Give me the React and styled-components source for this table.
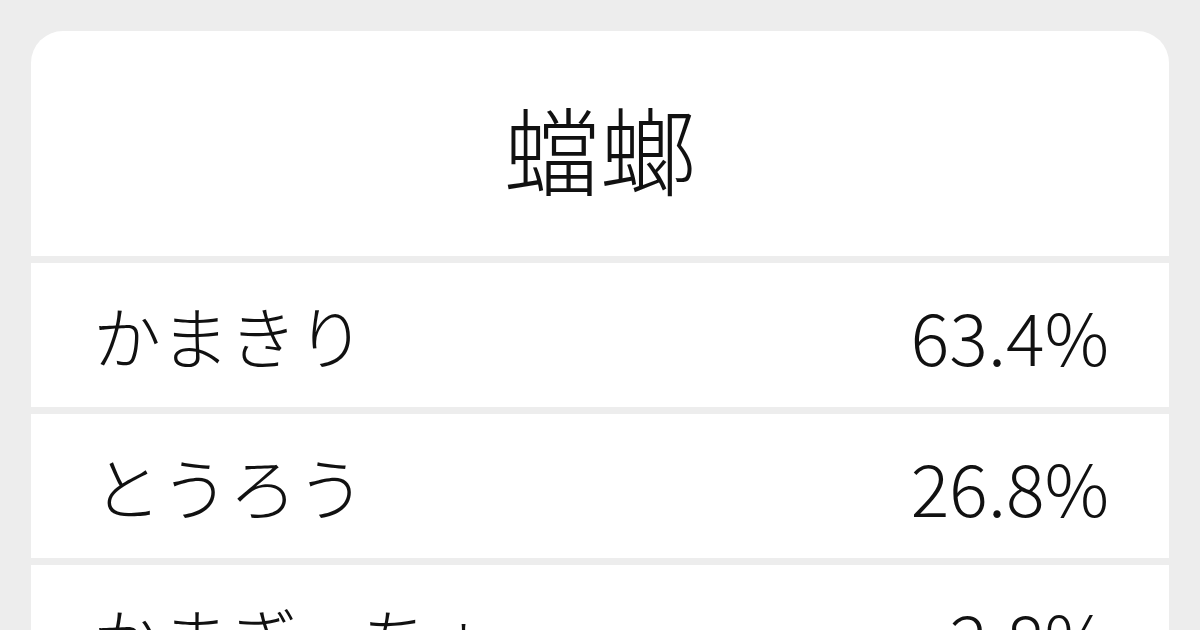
import React from 'react';
import styled, { createGlobalStyle } from 'styled-components';

const GlobalStyle = createGlobalStyle`
    html, body{
        margin: 0;
        padding: 0;
        background: #ededed;
        overflow: hidden;
    }
    body{
        font-family: "Noto Sans CJK JP Light", "Noto Sans CJK JP", "Noto Sans", sans-serif;
        color: #111111;
    }
`

const Page = styled.div`
    width: 1200px;
    height: 630px;
    padding: 31px 31px 0;
    box-sizing: border-box;
    overflow: hidden;
`

const Card = styled.div`
    display: flex;
    flex-direction: column;
    gap: 7px;
    border-radius: 32px 32px 0 0;
    overflow: hidden;
`

const Header = styled.div`
    height: 225px;
    background: #ffffff;
    display: flex;
    align-items: center;
    justify-content: center;
    h1{
        margin: 0;
        padding-top: 6px;
        font-size: 96px;
        font-weight: 300;
        line-height: 1;
    }
`

const Row = styled.div`
    height: 144px;
    flex-shrink: 0;
    background: #ffffff;
    display: flex;
    align-items: center;
    justify-content: space-between;
    padding: 0 62px 0 62px;
    font-weight: 300;
    line-height: 1;
    .word{
        font-size: 68px;
    }
    .rate{
        font-size: 72px;
        margin-right: -2px;
    }
`

const readings = [
    { word: 'かまきり', rate: '63.4%' },
    { word: 'とうろう', rate: '26.8%' },
    { word: 'かまぎっちょ', rate: '2.8%' },
]

const App = () => {
    return (
        <Page>
            <GlobalStyle />
            <Card>
                <Header>
                    <h1>蟷螂</h1>
                </Header>
                {readings.map((r) => (
                    <Row key={r.word}>
                        <span className="word">{r.word}</span>
                        <span className="rate">{r.rate}</span>
                    </Row>
                ))}
            </Card>
        </Page>
    )
}

export default App;
